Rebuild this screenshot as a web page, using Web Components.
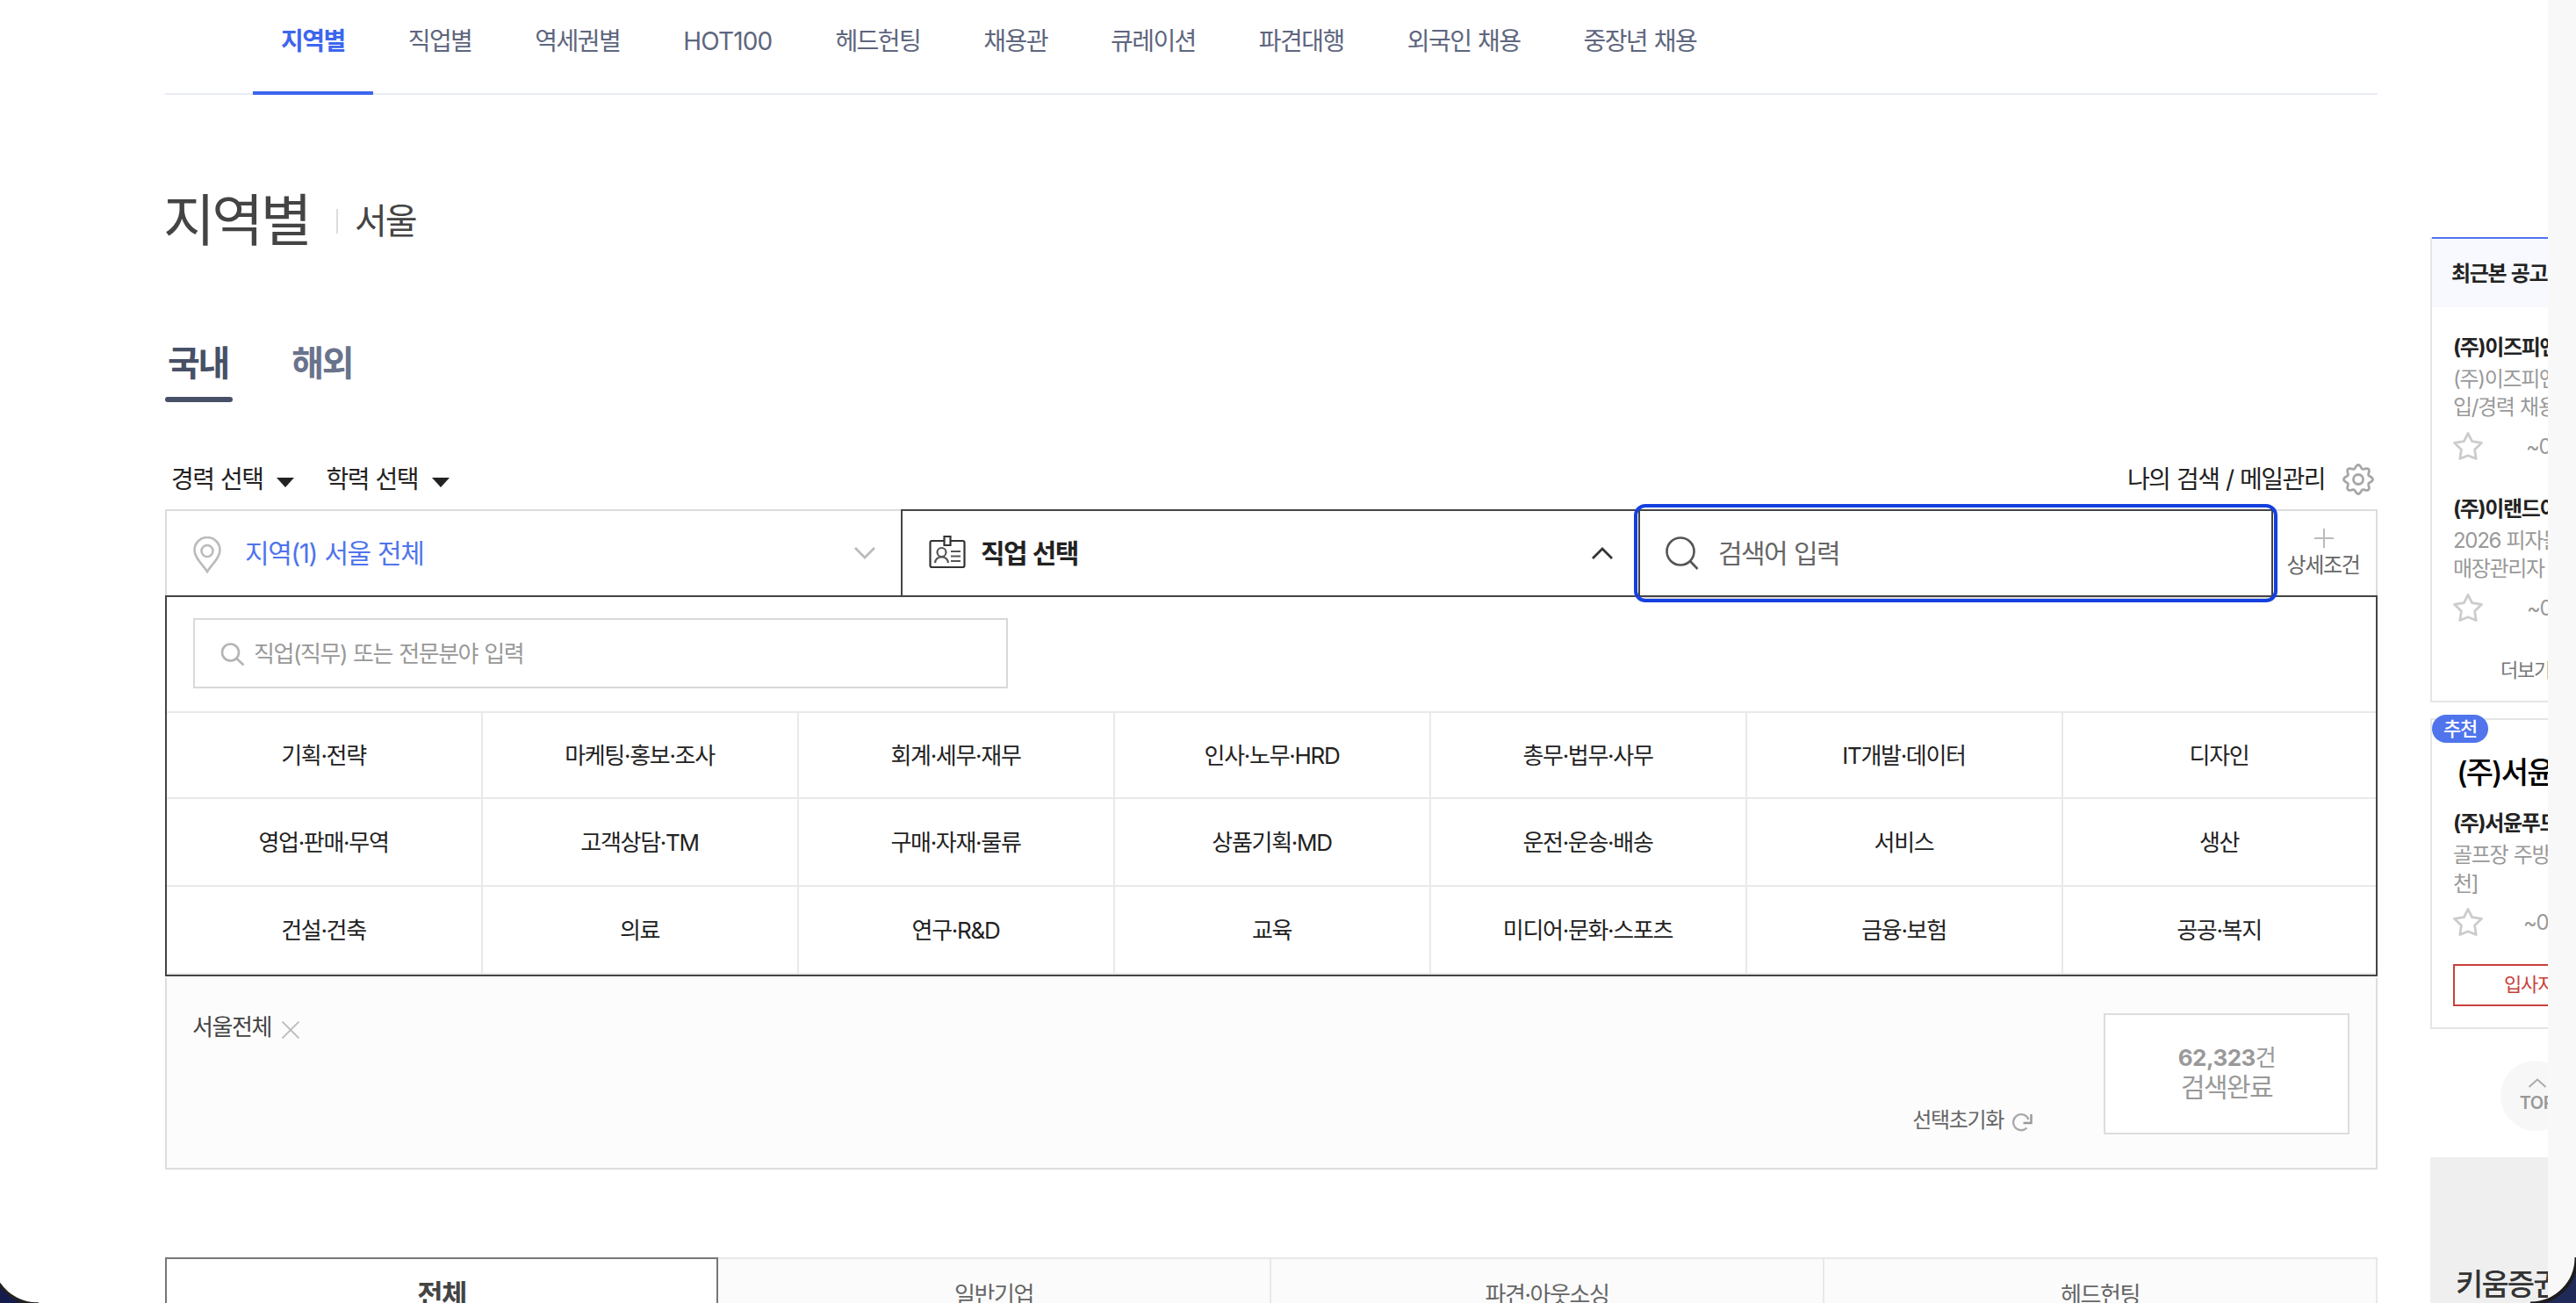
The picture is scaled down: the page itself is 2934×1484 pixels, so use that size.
<!DOCTYPE html>
<html lang="ko">
<head>
<meta charset="utf-8">
<title>지역별 채용</title>
<style>
body {
  margin: 0;
  overflow: hidden;
  background: #fff;
  color: #222;
  font-family: Inter, "Noto Sans CJK KR", sans-serif;
}
</style>
</head>
<body>
<job-page>
  <job-nav></job-nav>
  <page-title label="지역별">서울</page-title>
  <region-tabs></region-tabs>
  <filter-bar></filter-bar>
  <search-bar></search-bar>
  <job-panel></job-panel>
  <picked-box></picked-box>
  <corp-tabs></corp-tabs>

  <side-box slot="side" class="recent" head="최근본 공고">
    <recent-item name="(주)이즈피엔" date="~0" style="--date-x:49px">(주)이즈피엔<br>입/경력 채용</recent-item>
    <recent-item name="(주)이랜드이" date="~0" style="--date-x:50px">2026 피자몰<br>매장관리자</recent-item>
    <span slot="more">더보기</span>
  </side-box>
  <side-pick slot="side">
    <recent-item name="(주)서윤푸드" date="~0" style="--date-x:46px;--gap:3px;--lh:33px;--foot:10px">골프장 주방<br>천]</recent-item>
  </side-pick>
  <top-button slot="side">TOP</top-button>
  <side-ad slot="side">키움증권</side-ad>
</job-page>

<script>
// 자간은 글자 크기에 비례하도록 요소마다 em으로 지정한다
const base = `
*, *::before, *::after { box-sizing: border-box; }
:host, * { letter-spacing: var(--ls, -0.055em); word-spacing: 0.045em; }
:host { display: block; box-sizing: border-box; }
svg { display: block; flex: none; }
`;

const define = (name, css, html) => {
  customElements.define(
    name,
    class extends HTMLElement {
      constructor() {
        super();
        const shadowRoot = this.attachShadow({ mode: 'open' });
        const body = typeof html === 'function' ? html(this) : html;
        shadowRoot.innerHTML = `<style>${base}${css}</style>${body}`;
      }
    }
  );
};

// 톱니 아이콘의 외곽선
const gearPath = () => {
  let d = '';
  for (let i = 0; i <= 160; i++) {
    const t = (i / 160) * Math.PI * 2;
    const r = 14.6 + 1.9 * Math.cos(8 * t);
    d += (i ? 'L' : 'M') + (18 + r * Math.sin(t)).toFixed(2) + ' ' + (18 - r * Math.cos(t)).toFixed(2);
  }
  return d + 'Z';
};

define('job-page', `
:host { position: relative; display: flex; width: 2934px; height: 1484px; overflow: hidden; }
main { flex: none; width: 2520px; margin-left: 188px; }
aside { flex: none; width: 134px; margin-left: 60px; overflow: hidden; white-space: nowrap; }
.scroll { width: 32px; background: #f8f8f8; }
.corner { position: absolute; bottom: 0; }
.left { left: 0; }
.right { right: 0; }
`, `
<main><slot></slot></main>
<aside><slot name="side"></slot></aside>
<div class="scroll"></div>
<svg class="corner left" width="60" height="60" viewBox="0 0 60 60">
  <path d="M0 39A52 52 0 0 0 42 60H0Z" fill="#141c4c"/>
  <path d="M-1 38A52 52 0 0 0 44 61" fill="none" stroke="#222" stroke-width="3.5"/>
</svg>
<svg class="corner right" width="60" height="60" viewBox="0 0 60 60">
  <path d="M60 8A52 52 0 0 1 8 60H60Z" fill="#202a58"/>
  <path d="M60.500 8A52 52 0 0 1 8 60.500" fill="none" stroke="#1c1c1e" stroke-width="4"/>
</svg>
`);

const menus = ['지역별', '직업별', '역세권별', 'HOT100', '헤드헌팅', '채용관', '큐레이션', '파견대행', '외국인 채용', '중장년 채용'];

define('job-nav', `
:host { height: 108px; border-bottom: 2px solid #e9ecf4; }
ul { display: flex; gap: 8px; margin: 0; padding: 0 0 0 100px; list-style: none; }
li { height: 108px; padding: 27px 32px 0; font-size: 28px; line-height: 40px; color: #5e667e; white-space: nowrap; }
li.on { border-bottom: 4px solid #3d66ee; color: #3d66ee; font-weight: 700; }
li:nth-child(4) { letter-spacing: -0.03em; }
`, `<ul>${menus.map((m, i) => `<li${i ? '' : ' class="on"'}>${m}</li>`).join('')}</ul>`);

define('page-title', `
:host { display: flex; align-items: center; height: 80px; margin-top: 102px; color: #444; }
h1 { margin: 0 0 0 -2px; padding-top: 2px; font-size: 64px; line-height: 80px; font-weight: 400; }
i { width: 2px; height: 28px; margin: 4px 19px 0 31px; background: #ddd; }
span { font-size: 40px; line-height: 80px; padding-top: 4px; }
`, el => `<h1>${el.getAttribute('label')}</h1><i></i><span><slot></slot></span>`);

define('region-tabs', `
:host { display: flex; gap: 64px; height: 70px; margin-top: 98px; font-size: 40px; font-weight: 700; line-height: 52px; }
div { padding: 0 5px 0 3px; color: #69738c; }
.on { display: flex; flex-direction: column; justify-content: space-between; padding: 0; color: #475067; }
.on span { padding: 0 5px 0 3px; }
.on::after { content: ""; height: 6px; border-radius: 3px; background: #475067; }
`, '<div class="on"><span>국내</span></div><div>해외</div>');

define('filter-bar', `
:host { display: flex; align-items: center; height: 40px; margin-top: 67px; padding: 0 4px 0 7px; font-size: 28px; line-height: 40px; }
.sel { display: flex; align-items: center; gap: 16px; margin-right: 36px; padding-top: 2px; }
.sel::after { content: ""; margin-top: 6px; border: 10px solid transparent; border-top: 11px solid #222; border-bottom: 0; }
.my { display: flex; align-items: center; gap: 20px; margin-left: auto; padding-top: 1px; }
`, `
<div class="sel">경력 선택</div>
<div class="sel">학력 선택</div>
<div class="my">나의 검색 / 메일관리
  <svg width="36" height="36" viewBox="0 0 36 36" fill="none" stroke="#a6a6a6" stroke-width="2.800"><path d="${gearPath()}"/><circle cx="18" cy="18" r="5.500"/></svg>
</div>
`);

define('search-bar', `
:host { position: relative; display: flex; height: 98px; margin-top: 15px; font-size: 30px; line-height: 40px; }
.cell { display: flex; align-items: center; height: 98px; padding: 0 28px 2px 30px; border: 2px solid #ddd; border-width: 2px 0 0 2px; }
.cell span { padding-top: 1px; }
.cell .arrow { margin-left: auto; margin-top: 2px; }
.area { width: 838px; color: #4f74ec; }
.area span { letter-spacing: -0.048em; }
.job { width: 840px; border-color: #444; font-weight: 700; }
.word { position: relative; width: 723px; border-color: #444; border-right-width: 2px; color: #666; }
.word::after { content: ""; position: absolute; z-index: 1; left: -7px; top: -8px; width: 733px; height: 112px; border: 4px solid #1440e0; border-radius: 13px; }
.word::before { content: ""; position: absolute; z-index: 1; left: 0; right: 0; bottom: -4px; height: 2px; background: #ddd; }
.more { display: flex; flex-direction: column; align-items: center; flex: 1; padding: 20px 3px 0 0; border: 2px solid #ddd; border-width: 2px 2px 0 0; font-size: 24px; line-height: 30px; color: #666; }
.more svg { margin: 0 0 5px 2px; }
`, `
<div class="cell area">
  <svg width="32" height="42" viewBox="0 0 32 42" style="margin:6px 27px 0 0" fill="none" stroke="#bbb" stroke-width="2.600"><path d="M16 40C12 33 1.500 25 1.500 15.500a14.500 14.500 0 0 1 29 0C30.500 25 20 33 16 40Z"/><circle cx="16" cy="16.500" r="6.500"/></svg>
  <span>지역(1) 서울 전체</span>
  <svg class="arrow" width="26" height="16" viewBox="0 0 26 16" fill="none" stroke="#bbb" stroke-width="2.800"><path d="M2 2l11 11L24 2"/></svg>
</div>
<div class="cell job">
  <svg width="42" height="40" viewBox="0 0 42 40" style="margin-right:17px" fill="none" stroke="#333" stroke-width="2.200"><path d="M16.500 7H3.500q-2 0-2 2v26q0 2 2 2h35q2 0 2-2V9q0-2-2-2h-13M17.500 2h7v10h-7z"/><g stroke="#555"><circle cx="14.500" cy="20" r="5"/><path d="M7 32c.5-4 3-6.500 7.500-6.500S21.500 28 22 32M25 19h11M25 24.500h11M25 30h11"/></g></svg>
  <span>직업 선택</span>
  <svg class="arrow" width="26" height="16" viewBox="0 0 26 16" fill="none" stroke="#333" stroke-width="2.800"><path d="M2 14L13 3l11 11"/></svg>
</div>
<div class="cell word">
  <svg width="38" height="40" viewBox="0 0 38 40" style="margin:2px 22px 0 -1px" fill="none" stroke="#555" stroke-width="2.600"><circle cx="17" cy="18" r="15.500"/><path d="M28 29l8.500 9"/></svg>
  <span>검색어 입력</span>
</div>
<div class="more">
  <svg width="22" height="22" viewBox="0 0 22 22" stroke="#bbb" stroke-width="2"><path d="M11 0v22M0 11h22"/></svg>
  상세조건
</div>
`);

const jobs = [
  '기획·전략', '마케팅·홍보·조사', '회계·세무·재무', '인사·노무·HRD', '총무·법무·사무', 'IT개발·데이터', '디자인',
  '영업·판매·무역', '고객상담·TM', '구매·자재·물류', '상품기획·MD', '운전·운송·배송', '서비스', '생산',
  '건설·건축', '의료', '연구·R&amp;D', '교육', '미디어·문화·스포츠', '금융·보험', '공공·복지'
];

define('job-panel', `
:host { height: 434px; padding-top: 24px; border: 2px solid #444; font-size: 26px; }
.find { display: flex; align-items: center; gap: 10px; width: 928px; height: 80px; margin-left: 30px; padding: 0 29px 3px; border: 2px solid #d9d9d9; color: #999; }
.find svg { margin-top: 5px; }
ul { display: grid; grid-template-columns: repeat(6, 360px) 1fr; grid-template-rows: 98px 100px 100px; margin: 26px 0 0; padding: 0; border-top: 2px solid #e9e9e9; list-style: none; }
li { display: flex; align-items: center; justify-content: center; border: 2px solid #e9e9e9; border-width: 0 2px 2px 0; padding: 2px 1px 0 0; line-height: 36px; letter-spacing: -0.05em; }
li:nth-child(7n) { border-right: 0; }
`, `
<div class="find">
  <svg width="28" height="28" viewBox="0 0 28 28" fill="none" stroke="#b4b4b4" stroke-width="2.600"><circle cx="11.500" cy="12" r="9.500"/><path d="M18.500 19l8 7.500"/></svg>
  직업(직무) 또는 전문분야 입력
</div>
<ul>${jobs.map(j => `<li>${j}</li>`).join('')}</ul>
`);

define('picked-box', `
:host { display: flex; height: 218px; margin-top: 2px; padding: 40px 30px 0; border: 2px solid #ddd; border-top: 0; background: #fcfcfc; }
.chip { display: flex; align-items: center; gap: 12px; height: 32px; margin-left: -1px; font-size: 26px; line-height: 32px; color: #444; }
.chip svg { margin-top: 5px; }
.reset { display: flex; align-items: center; gap: 9px; height: 32px; margin: 106px 81px 0 auto; font-size: 24px; line-height: 32px; color: #666; }
.reset svg { margin-top: 4px; }
.done { width: 280px; height: 138px; padding-top: 32px; border: 2px solid #ddd; background: #fff; color: #999; text-align: center; font-size: 26px; line-height: 34px; }
.done b { letter-spacing: -0.02em; }
.done p { margin: 0; font-size: 30px; line-height: 32px; }
`, `
<div class="chip">서울전체
  <svg width="20" height="20" viewBox="0 0 20 20" stroke="#bbb" stroke-width="1.800"><path d="M.5 .5l19 19M19.500 .5l-19 19"/></svg>
</div>
<div class="reset">선택초기화
  <svg width="24" height="22" viewBox="0 0 24 22" fill="none" stroke="#aaa" stroke-width="2.400"><path d="M17.500 17.500A9 9 0 1 1 19.500 8"/><path d="M22.500 2v10h-9" stroke="#999"/></svg>
</div>
<div class="done"><b>62,323</b>건<p>검색완료</p></div>
`);

define('corp-tabs', `
:host { display: grid; grid-template-columns: repeat(4, 630px); height: 84px; margin-top: 100px; }
div { border: 2px solid #e8e8e8; border-left: 0; background: #fbfbfb; text-align: center; font-size: 26px; line-height: 81px; color: #666; }
.on { border: 2px solid #777; background: #fff; color: #444; font-size: 32px; font-weight: 700; }
`, '<div class="on">전체</div><div>일반기업</div><div>파견·아웃소싱</div><div>헤드헌팅</div>');

define('side-box', `
:host { width: 240px; height: 530px; margin-top: 270px; border: 2px solid #e5e5e5; border-top: 0; }
h2 { height: 80px; margin: 0; padding-left: 22px; border-top: 2px solid #4f74ec; background: #f8f9ff; font-size: 24px; line-height: 80px; }
.list { display: flex; flex-direction: column; gap: 40px; padding: 30px 0 0 24px; }
.more { margin-top: 39px; padding-left: 78px; font-size: 22px; line-height: 32px; color: #777; }
`, el => `<h2>${el.getAttribute('head')}</h2><div class="list"><slot></slot></div><div class="more"><slot name="more"></slot></div>`);

define('recent-item', `
:host { font-size: 24px; height: 144px; }
strong { display: block; line-height: 32px; }
p { margin: var(--gap, 4px) 0 0; line-height: var(--lh, 32px); color: #999; letter-spacing: -0.05em; }
.foot { display: flex; align-items: center; gap: var(--date-x); height: 34px; margin-top: var(--foot, 11px); color: #999; }
`, el => `
<strong>${el.getAttribute('name')}</strong>
<p><slot></slot></p>
<div class="foot">
  <svg width="34" height="32" viewBox="0 0 34 32" fill="none" stroke="#ccc" stroke-width="2.800" stroke-linejoin="round"><path d="M17 1.500l4.600 9.200 10.900 1.600-7.900 7.800 1.600 10.400-9.200-3.700-9.200 3.700 1.600-10.400L1.500 12.300l10.900-1.600z"/></svg>
  ${el.getAttribute('date')}
</div>
`);

define('side-pick', `
:host { position: relative; width: 240px; height: 354px; margin-top: 18px; padding: 37px 0 0 24px; border: 2px solid #e5e5e5; }
.badge { position: absolute; left: 0; top: -6px; width: 64px; height: 32px; border-radius: 16px; background: #4f74ec; color: #fff; text-align: center; font-size: 22px; font-weight: 500; line-height: 32px; }
.logo { padding-left: 4px; font-size: 34px; line-height: 46px; color: #000; font-weight: 500; margin-bottom: 19px; }
.btn { width: 190px; height: 48px; margin-top: 32px; padding-left: 56px; border: 2px solid #c9403a; font-size: 22px; line-height: 43px; color: #c9403a; }
`, `
<span class="badge">추천</span>
<div class="logo">(주)서윤</div>
<slot></slot>
<div class="btn">입사지원</div>
`);

define('top-button', `
:host { --ls: -0.02em; width: 80px; height: 80px; margin: 36px 0 0 80px; padding: 20px 0 0 3px; border-radius: 50%; background: #f7f7f7; color: #999; font-size: 20px; font-weight: 600; line-height: 26px; text-align: center; }
svg { margin: 0 auto 4px; }
`, '<svg width="22" height="11" viewBox="0 0 22 11" fill="none" stroke="#aaa" stroke-width="2"><path d="M1.500 10L11 1.500l9.500 8.500"/></svg><slot></slot>');

define('side-ad', `
:host { width: 240px; height: 200px; margin-top: 30px; padding: 123px 0 0 29px; background: #efefef; color: #333; font-size: 34px; font-weight: 500; line-height: 44px; }
`, '<slot></slot>');
</script>
</body>
</html>
